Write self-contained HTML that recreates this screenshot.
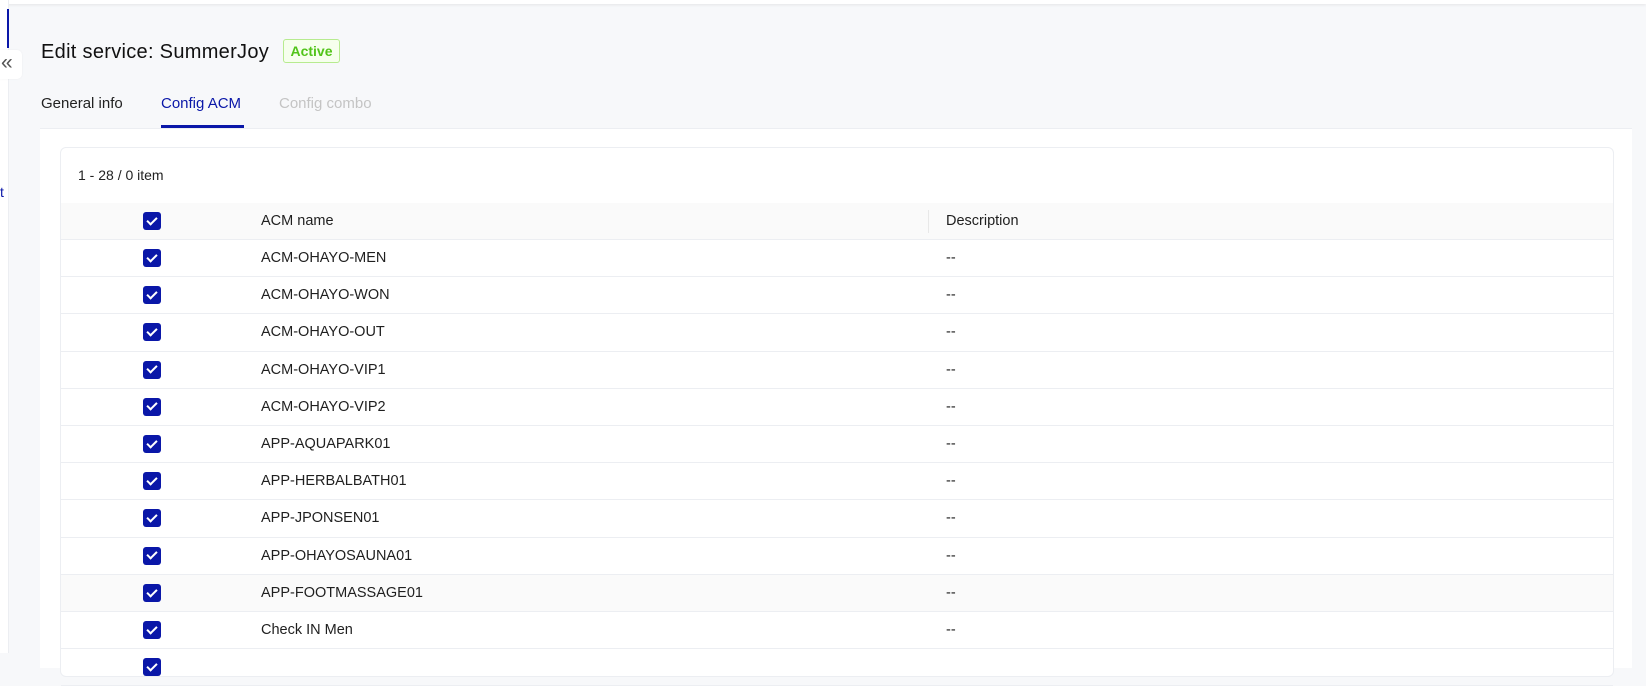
<!DOCTYPE html>
<html><head><meta charset="utf-8"><style>
*{box-sizing:border-box;margin:0;padding:0}
body{width:1646px;height:653px;overflow:hidden;background:#f7f8fa;font-family:"Liberation Sans",sans-serif;color:#1f1f1f;position:relative}
.side{position:absolute;left:0;top:0;width:9px;height:653px;background:#fff;border-right:1px solid #eceef2}
.topbar{position:absolute;left:0;top:0;width:1646px;height:4px;background:#fff;box-shadow:0 1px 3px rgba(0,0,0,.08)}
.bl{position:absolute;left:7px;top:9px;width:2px;height:39px;background:#0a17a8}
.col{position:absolute;left:0;top:50px;width:22px;height:29px;background:#fff;border-radius:0 5px 5px 0;font-size:21px;color:#555;line-height:26px;padding-left:1px;box-shadow:0 0 2px rgba(0,0,0,.05)}
.t{position:absolute;left:0;top:184px;font-size:14px;color:#0a17a8}
h1{position:absolute;left:41px;top:41px;font-size:20px;font-weight:normal;color:#111;letter-spacing:.3px}
.badge{position:absolute;left:283px;top:39px;width:57px;height:24px;border:1px solid #b7eb8f;background:#f6ffed;color:#52c41a;font-size:14px;font-weight:bold;text-align:center;line-height:22px;border-radius:3px}
.tab{position:absolute;top:95px;font-size:15px}
.ul{position:absolute;left:161px;top:125px;width:83px;height:3px;background:#0a17a8}
.panel{position:absolute;left:40px;top:128px;width:1592px;height:540px;background:#fff;border-top:1px solid #eceef2}
.card{position:absolute;left:60px;top:147px;width:1554px;height:530px;background:#fff;border:1px solid #eceef2;border-radius:6px}
.cnt{position:absolute;left:78px;top:167px;font-size:14px;color:#222}
.hdr{position:absolute;left:61px;top:203px;width:1552px;height:37px;background:#fafafa;border-bottom:1px solid #eceef2;font-size:14.5px}
.row{position:absolute;left:61px;width:1552px;height:37.2px;border-bottom:1px solid #eceef2;font-size:14.5px}
.cb{position:absolute;left:82px;top:9px;width:18px;height:18px;background:#0a17a8;border-radius:3px}
.cb:after{content:"";position:absolute;left:6px;top:2.5px;width:4px;height:8px;border:solid #fff;border-width:0 2.2px 2.2px 0;transform:rotate(45deg)}
.n{position:absolute;left:200px;top:10px}
.d{position:absolute;left:885px;top:10px}
.div{position:absolute;left:867px;top:7px;width:1px;height:23px;background:#e8e8e8}
</style></head><body>
<div class="topbar"></div>
<div class="side"></div>
<div class="bl"></div>
<div class="col">«</div>
<div class="t">t</div>
<h1>Edit service: SummerJoy</h1>
<div class="badge">Active</div>
<div class="tab" style="left:41px;color:#222">General info</div>
<div class="tab" style="left:161px;color:#0a17a8">Config ACM</div>
<div class="tab" style="left:279px;color:#c4c4c4">Config combo</div>
<div class="ul"></div>
<div class="panel"></div>
<div class="card"></div>
<div class="cnt">1 - 28 / 0 item</div>
<div class="hdr"><div class="cb"></div><div class="n">ACM name</div><div class="div"></div><div class="d">Description</div></div>
<div class="row" style="top:240px"><div class="cb"></div><div class="n">ACM-OHAYO-MEN</div><div class="d">--</div></div>
<div class="row" style="top:277.2px"><div class="cb"></div><div class="n">ACM-OHAYO-WON</div><div class="d">--</div></div>
<div class="row" style="top:314.4px"><div class="cb"></div><div class="n">ACM-OHAYO-OUT</div><div class="d">--</div></div>
<div class="row" style="top:351.6px"><div class="cb"></div><div class="n">ACM-OHAYO-VIP1</div><div class="d">--</div></div>
<div class="row" style="top:388.8px"><div class="cb"></div><div class="n">ACM-OHAYO-VIP2</div><div class="d">--</div></div>
<div class="row" style="top:426px"><div class="cb"></div><div class="n">APP-AQUAPARK01</div><div class="d">--</div></div>
<div class="row" style="top:463.2px"><div class="cb"></div><div class="n">APP-HERBALBATH01</div><div class="d">--</div></div>
<div class="row" style="top:500.4px"><div class="cb"></div><div class="n">APP-JPONSEN01</div><div class="d">--</div></div>
<div class="row" style="top:537.6px"><div class="cb"></div><div class="n">APP-OHAYOSAUNA01</div><div class="d">--</div></div>
<div class="row" style="top:575px;background:#fafafa"><div class="cb"></div><div class="n">APP-FOOTMASSAGE01</div><div class="d">--</div></div>
<div class="row" style="top:612px"><div class="cb"></div><div class="n">Check IN Men</div><div class="d">--</div></div>
<div class="row" style="top:649px"><div class="cb"></div></div>
</body></html>
